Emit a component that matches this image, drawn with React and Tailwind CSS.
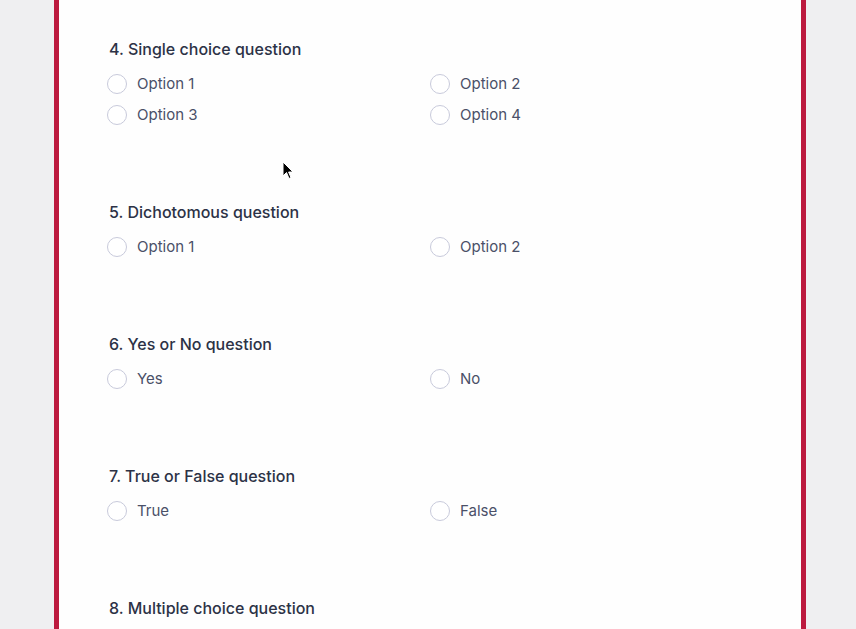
import React from 'react';

const questions = [
  { title: '4. Single choice question', options: ['Option 1', 'Option 2', 'Option 3', 'Option 4'] },
  { title: '5. Dichotomous question', options: ['Option 1', 'Option 2'] },
  { title: '6. Yes or No question', options: ['Yes', 'No'] },
  { title: '7. True or False question', options: ['True', 'False'] },
  { title: '8. Multiple choice question', options: [] },
];

const Radio = ({ label }) => (
  <label className="flex items-center gap-[10px] h-5">
    <span className="w-5 h-5 rounded-full border border-[#c8cadb] bg-white shrink-0" />
    <span className="text-[15px] text-[#4a5068] leading-5">{label}</span>
  </label>
);

const App = () => {
  return (
    <div className="relative w-[856px] h-[629px] overflow-hidden bg-[#efeff1]" style={{ fontFamily: 'Inter, "Noto Sans", sans-serif' }}>
      <div className="ml-[54px] w-[752px] h-[629px] bg-[#fefefe] border-x-[5px] border-[#bc1a3f] px-[48px] pt-[39px]">
        {questions.map((q) => (
          <div key={q.title} className="mb-[77px]">
            <h3 className="text-[16px] font-medium text-[#2c3246] leading-5 pl-[2px] mb-[15px]">{q.title}</h3>
            <div className="grid grid-cols-2 gap-y-[11px]">
              {q.options.map((o) => (
                <Radio key={o} label={o} />
              ))}
            </div>
          </div>
        ))}
      </div>

      {/* mouse cursor */}
      <svg className="absolute left-[282px] top-[161px]" width="12" height="19" viewBox="0 0 12 19">
        <path d="M1 1 L1 15 L4.5 11.5 L7 17.5 L9 16.6 L6.6 11 L11 11 Z" fill="#000" stroke="#fff" strokeWidth="1" strokeLinejoin="round" />
      </svg>
    </div>
  );
};

export default App;
